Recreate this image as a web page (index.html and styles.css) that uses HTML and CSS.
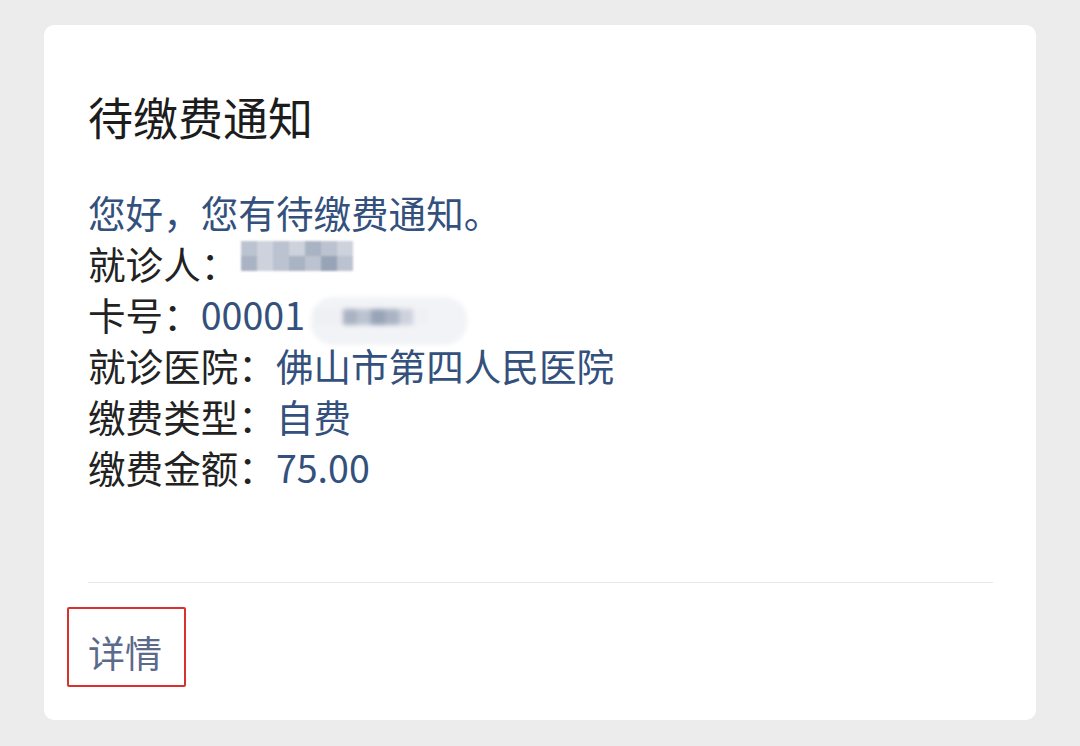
FILE: index.html
```html
<!DOCTYPE html>
<html lang="zh-CN">
<head>
<meta charset="utf-8">
<title>待缴费通知</title>
<link rel="stylesheet" href="styles.css">
</head>
<body>
<div class="card">
  <h1 class="title">待缴费通知</h1>
  <div class="body">
    <div class="line greet">您好，您有待缴费通知。</div>
    <div class="line"><span class="label">就诊人：</span><span class="mosaic m1"><i class="c2"></i><i class="c1"></i><i class="c2"></i><i class="c1"></i><i class="c3"></i><i class="c2"></i><i class="c1"></i><i class="c3"></i><i class="c1"></i><i class="c2"></i><i class="c3"></i><i class="c2"></i><i class="c4"></i><i class="c2"></i></span></div>
    <div class="line"><span class="label">卡号：</span><span class="value">00001</span><span class="smudge"><span class="mosaic m2"><i class="c0"></i><i class="c0"></i><i class="c3"></i><i class="c2"></i><i class="c4"></i><i class="c3"></i><i class="c1"></i><i class="c0"></i></span></span></div>
    <div class="line"><span class="label">就诊医院：</span><span class="value">佛山市第四人民医院</span></div>
    <div class="line"><span class="label">缴费类型：</span><span class="value">自费</span></div>
    <div class="line"><span class="label">缴费金额：</span><span class="value">75.00</span></div>
  </div>
  <div class="divider"></div>
  <div class="footer"><a class="detail">详情</a></div>
</div>
</body>
</html>
```

FILE: styles.css
```css
html, body {
  margin: 0;
  padding: 0;
  background: #ececec;
  font-family: "Noto Sans CJK SC", "Noto Sans", sans-serif;
}
body {
  padding: 25px 44px 26px 44px;
}
.card {
  background: #ffffff;
  border-radius: 10px;
  padding: 62px 43px 33px 44px;
}
.title {
  margin: 0;
  font-size: 45px;
  font-weight: 400;
  line-height: 60px;
  color: #1c1c1c;
  letter-spacing: 0;
}
.body {
  margin-top: 39px;
  font-size: 37.6px;
  font-weight: 400;
  line-height: 51px;
  color: #222222;
}
.line {
  display: flex;
  align-items: center;
  white-space: nowrap;
  height: 51px;
}
.greet { color: #34507c; }
.label { color: #222222; }
.value { color: #34507c; }
.mosaic {
  display: inline-grid;
  grid-template-columns: repeat(7, 16px);
  grid-auto-rows: 15px;
  filter: blur(0.8px);
}
.mosaic i { display: block; }
.m1 { margin-left: 3px; margin-top: -14px; }
.c0 { background: #eef0f4; }
.c1 { background: #cdd2dc; }
.c2 { background: #bcc3d0; }
.c3 { background: #aab3c3; }
.c4 { background: #97a3b7; }
.smudge {
  display: inline-flex;
  align-items: center;
  margin-left: 6px;
  margin-top: 14px;
  padding: 12px 40px 20px 4px;
  background: #f2f3f6;
  border-radius: 22px;
  filter: blur(2px);
}
.m2 {
  grid-template-columns: repeat(8, 14px);
  grid-auto-rows: 16px;
}
.divider {
  margin-top: 90px;
  height: 1px;
  background: #e6e6e6;
}
.footer {
  margin-top: 24px;
  margin-left: -21px;
  display: flex;
}
.detail {
  display: block;
  border: 2px solid #d8322e;
  border-radius: 2px;
  padding: 10px 22px 0 19px;
  height: 66px;
  line-height: 66px;
  font-size: 37px;
  font-weight: 400;
  color: #5b6a8a;
}
```
